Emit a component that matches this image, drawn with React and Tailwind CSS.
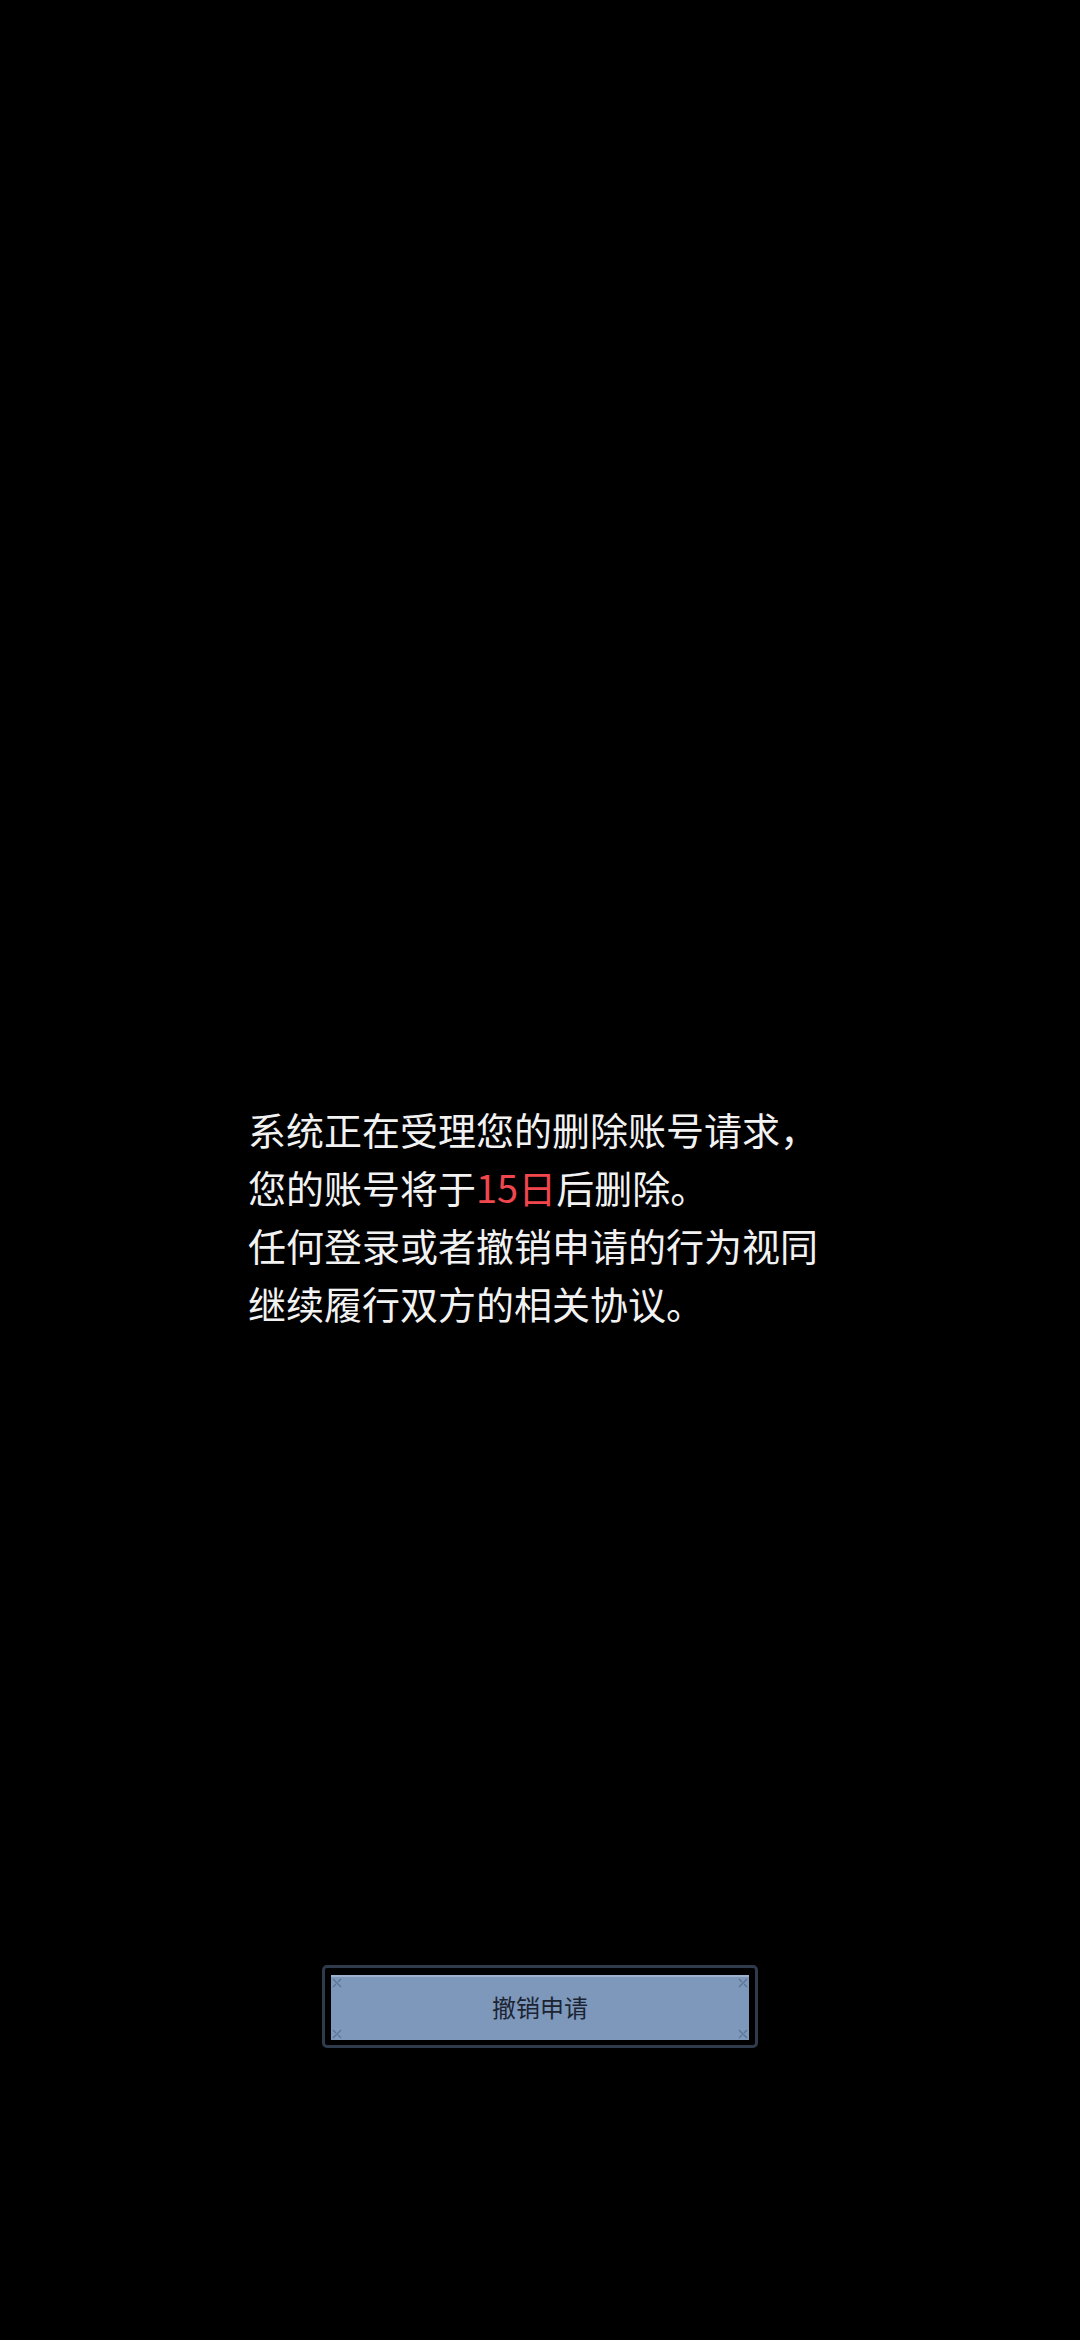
export default function App() {
  const cjk = { fontFamily: '"Noto Sans CJK SC", "Noto Sans", sans-serif' };

  const Corner = ({ className }) => (
    <svg viewBox="0 0 10 10" className={`absolute w-[10px] h-[10px] ${className}`}>
      <path d="M1 1 L9 9 M1 9 L4 6 M6 4 L9 1" stroke="#5c7595" strokeWidth="1.4" fill="none" />
    </svg>
  );

  return (
    <div className="w-[1080px] h-[2340px] bg-black flex flex-col" style={cjk}>
      <div className="pt-[1100px] pl-[248px] text-[38px] leading-[58px] text-[#f2f2f2]">
        <p>系统正在受理您的删除账号请求，</p>
        <p>
          您的账号将于<span className="text-[#f0474f]">15日</span>后删除。
        </p>
        <p>任何登录或者撤销申请的行为视同</p>
        <p>继续履行双方的相关协议。</p>
      </div>

      <div className="mt-[633px] self-center w-[436px] h-[83px] rounded-[5px] border-[3px] border-[#2f3a4a] bg-black px-[6px] pt-[7px] pb-[5px]">
        <button className="relative w-full h-full bg-[#7d98bb] border-t-2 border-[#9cb2cd] pb-[3px] flex items-center justify-center text-[24px] text-[#1c2433]">
          <Corner className="left-[1px] top-[1px]" />
          <Corner className="left-[1px] bottom-[1px] -scale-y-100" />
          <Corner className="right-[1px] top-[1px] -scale-x-100" />
          <Corner className="right-[1px] bottom-[1px] -scale-100" />
          撤销申请
        </button>
      </div>
    </div>
  );
}
